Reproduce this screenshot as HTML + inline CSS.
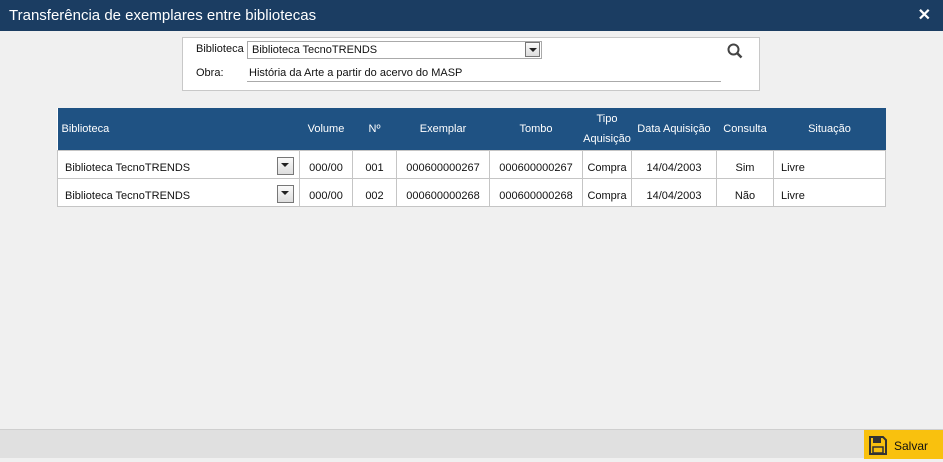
<!DOCTYPE html>
<html><head><style>
*{margin:0;padding:0;box-sizing:border-box}
body{width:943px;height:458px;background:#f0f0f0;font-family:"Liberation Sans",Tahoma,sans-serif;font-size:11px;color:#111;position:relative;overflow:hidden}
.title{position:absolute;left:0;top:0;width:943px;height:31px;background:#1b3d62;color:#fff;font-size:15px;line-height:31px;padding-left:9px}
.x{position:absolute;right:12px;top:0;font-size:16px;font-weight:bold}
.panel{position:absolute;left:182px;top:37px;width:578px;height:54px;background:#fff;border:1px solid #c8c8c8}
.lbl{position:absolute;left:13px;font-size:11px}
.sel{position:absolute;left:64px;top:3px;width:295px;height:18px;border:1px solid #aaa;padding-left:4px;line-height:16px}
.dd{position:absolute;width:15px;height:15px;border:1px solid #777;background:linear-gradient(#fafafa,#ddd);}
.dd:after{content:"";position:absolute;left:3px;top:5px;border-left:4px solid transparent;border-right:4px solid transparent;border-top:4px solid #222}
.inp{position:absolute;left:64px;top:25px;width:474px;height:19px;border-bottom:1px solid #aaa;padding-left:2px;line-height:21px}
table{position:absolute;left:57px;top:108px;width:829px;border-collapse:collapse;background:#fff}
th{background:#1f5283;color:#fff;font-weight:normal;height:42px;text-align:center;font-size:11px;line-height:20px}
td{height:28px;border:1px solid #c5c5c5;text-align:center;position:relative;padding-top:7px}
.foot{position:absolute;left:0;top:429px;width:943px;height:29px;background:#e0e0e0;border-top:1px solid #cfcfcf}
.save{position:absolute;right:0;top:0;width:79px;height:29px;background:#f9c10e;font-size:12px;line-height:32px;padding-left:30px}
</style></head><body>
<div class="title">Transferência de exemplares entre bibliotecas<span class="x">✕</span></div>
<div class="panel">
<span class="lbl" style="top:5px">Biblioteca</span>
<div class="sel">Biblioteca TecnoTRENDS<div class="dd" style="right:1px;top:0"></div></div>
<span class="lbl" style="top:29px">Obra:</span>
<div class="inp">História da Arte a partir do acervo do MASP</div>
<svg style="position:absolute;left:544px;top:5px" width="16" height="16" viewBox="0 0 16 16"><circle cx="6.5" cy="6.5" r="5" fill="none" stroke="#444" stroke-width="2"/><line x1="10" y1="10" x2="14.5" y2="14.5" stroke="#444" stroke-width="2.5"/></svg>
</div>
<table>
<tr><th style="width:242px;text-align:left;padding-left:4px">Biblioteca</th><th style="width:53px">Volume</th><th style="width:44px">Nº</th><th style="width:93px">Exemplar</th><th style="width:93px">Tombo</th><th style="width:49px">Tipo<br>Aquisição</th><th style="width:85px">Data Aquisição</th><th style="width:57px">Consulta</th><th>Situação</th></tr>
<tr><td style="text-align:left;padding-left:7px">Biblioteca TecnoTRENDS<div class="dd" style="right:5px;top:6px;width:17px;height:18px"></div></td><td>000/00</td><td>001</td><td>000600000267</td><td>000600000267</td><td>Compra</td><td>14/04/2003</td><td>Sim</td><td style="text-align:left;padding-left:7px">Livre</td></tr>
<tr><td style="text-align:left;padding-left:7px">Biblioteca TecnoTRENDS<div class="dd" style="right:5px;top:6px;width:17px;height:18px"></div></td><td>000/00</td><td>002</td><td>000600000268</td><td>000600000268</td><td>Compra</td><td>14/04/2003</td><td>Não</td><td style="text-align:left;padding-left:7px">Livre</td></tr>
</table>
<div class="foot"><div class="save"><svg style="position:absolute;left:5px;top:6px" width="18" height="19" viewBox="0 0 18 19"><path d="M1 1h13l3 3v14H1z" fill="none" stroke="#333" stroke-width="2"/><rect x="4" y="2" width="8" height="5" fill="#333"/><rect x="4" y="11" width="10" height="6" fill="none" stroke="#333" stroke-width="1.5"/></svg>Salvar</div></div>
</body></html>
